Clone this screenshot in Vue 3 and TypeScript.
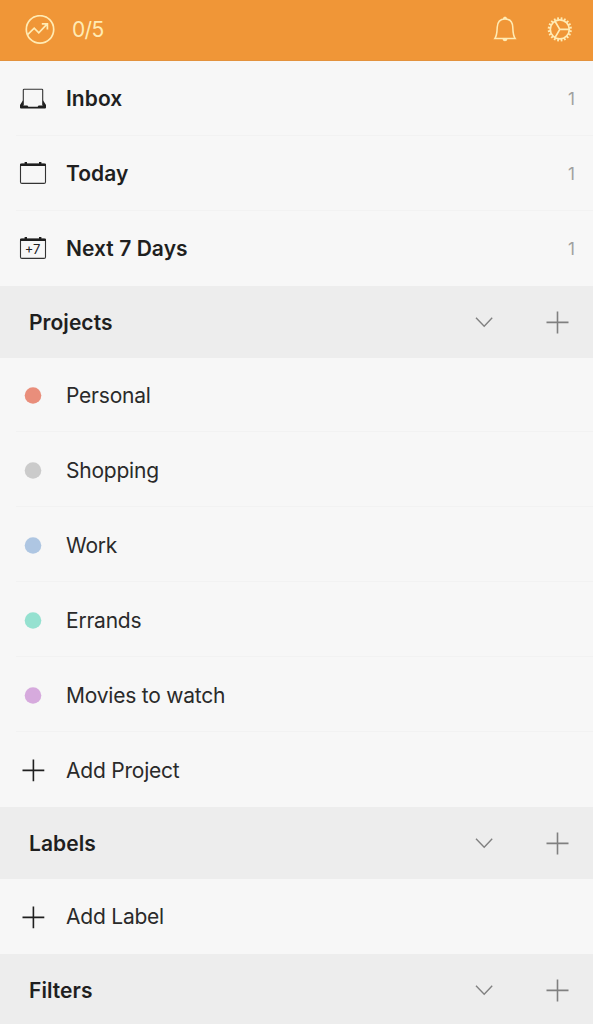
<script setup lang="ts">
interface Entry {
  label: string
  kind: 'inbox' | 'today' | 'week' | 'dot' | 'add'
  tone?: string
  count?: number
}
interface Section {
  title: string
  entries: Entry[]
}

const mainEntries: Entry[] = [
  { label: 'Inbox', kind: 'inbox', count: 1 },
  { label: 'Today', kind: 'today', count: 1 },
  { label: 'Next 7 Days', kind: 'week', count: 1 },
]

const sections: Section[] = [
  {
    title: 'Projects',
    entries: [
      { label: 'Personal', kind: 'dot', tone: 'coral' },
      { label: 'Shopping', kind: 'dot', tone: 'gray' },
      { label: 'Work', kind: 'dot', tone: 'blue' },
      { label: 'Errands', kind: 'dot', tone: 'mint' },
      { label: 'Movies to watch', kind: 'dot', tone: 'violet' },
      { label: 'Add Project', kind: 'add' },
    ],
  },
  { title: 'Labels', entries: [{ label: 'Add Label', kind: 'add' }] },
  { title: 'Filters', entries: [] },
]

const teeth = Array.from({ length: 20 }, (_, i) => i * 18)
</script>

<template>
  <div class="screen">
    <header class="topbar">
      <svg class="karma" width="30" height="30" viewBox="0 0 30 30">
        <circle cx="15" cy="14.4" r="13.7" />
        <path d="M2.6 19.6 L9.2 13.2 L13.8 17.8 L22 9.2 M16.8 8.8 H22.4 V14.4" />
      </svg>
      <span class="score">0/5</span>
      <svg class="bell" width="24" height="28" viewBox="0 0 24 28">
        <path d="M1.8 22.6 C4 19.6 4 16.8 4.2 11.4 C4.4 6 7.4 3 12 3 C16.6 3 19.6 6 19.8 11.4 C20 16.8 20 19.6 22.2 22.6 Z" />
        <path class="solid" d="M10 3 C10 1.4 10.8 0.8 12 0.8 C13.2 0.8 14 1.4 14 3 Z M9.6 23 C9.8 24.6 10.7 25.2 12 25.2 C13.3 25.2 14.2 24.6 14.4 23 Z" />
      </svg>
      <svg class="gear" width="26" height="26" viewBox="0 0 26 26">
        <g transform="translate(-0.2 -0.6)">
          <circle cx="13" cy="13" r="9.5" />
          <path d="M13 13 H22.5 M13 13 L8.2 4.8 M13 13 L8.2 21.2" />
          <path v-for="angle in teeth" :key="angle" class="tooth" d="M13 0.9 V3.4" :transform="`rotate(${angle + 9} 13 13)`" />
        </g>
      </svg>
    </header>

    <ul class="list">
      <li v-for="entry in mainEntries" :key="entry.label" class="row strong">
        <span class="lead">
          <svg v-if="entry.kind === 'inbox'" width="28" height="24" viewBox="0 0 28 24">
            <path class="ink" d="M4.2 13 L1 18 V20.6 Q1 21.6 2 21.6 H26 Q27 21.6 27 20.6 V18 L23.8 13 V18.6 H19.6 L18.6 19.8 H9.4 L8.4 18.6 H4.2 Z" />
            <path class="thin" d="M4.3 18.5 V3 Q4.3 2.2 5.1 2.2 H22.9 Q23.7 2.2 23.7 3 V18.5" />
          </svg>
          <svg v-else width="28" height="24" viewBox="0 0 28 24">
            <rect class="thin" x="1.5" y="2.2" width="25" height="19.2" rx="1.5" />
            <path class="ink" d="M1 4 V2.6 Q1 1.6 2 1.6 H5.6 V0 H8 V1.6 H20 V0 H22.4 V1.6 H26 Q27 1.6 27 2.6 V4 Z" />
            <text v-if="entry.kind === 'week'" x="13.6" y="17.2" text-anchor="middle">+7</text>
          </svg>
        </span>
        <span class="label">{{ entry.label }}</span>
        <span class="count">{{ entry.count }}</span>
      </li>
    </ul>

    <section v-for="section in sections" :key="section.title">
      <h2 class="section-bar">
        <span class="section-title">{{ section.title }}</span>
        <svg class="chevron" width="18" height="12" viewBox="0 0 18 12">
          <path d="M1 1.8 L9.2 10.2 L17.2 1.8" />
        </svg>
        <svg class="plus" width="23" height="23" viewBox="0 0 23 23">
          <path d="M0.5 11.4 H22.5 M11.5 0.4 V22.4" />
        </svg>
      </h2>
      <ul class="list">
        <li v-for="entry in section.entries" :key="entry.label" class="row">
          <span class="lead">
            <svg v-if="entry.kind === 'dot'" class="dot" :class="entry.tone" width="18" height="18" viewBox="0 0 18 18">
              <circle cx="9" cy="9.5" r="8.3" />
            </svg>
            <svg v-else class="plus dark" width="24" height="24" viewBox="0 0 24 24">
              <path d="M1.5 12.4 H23.3 M12.4 1.5 V23.3" />
            </svg>
          </span>
          <span class="label">{{ entry.label }}</span>
        </li>
      </ul>
    </section>
  </div>
</template>

<style>
body {
  margin: 0;
  background: #f7f7f7;
}
</style>

<style scoped>
.screen {
  width: 100%;
  height: 1024px;
  overflow: hidden;
  background: #f7f7f7;
  color: #1f1f1f;
  font-family: Inter, Roboto, "Liberation Sans", sans-serif;
}
svg {
  display: block;
  flex: none;
  fill: none;
}
.topbar {
  box-sizing: border-box;
  height: 61px;
  display: flex;
  align-items: center;
  padding: 0 20px 0 25px;
  background: #f09637;
  border-bottom: 1px solid #e3923d;
}
.topbar svg {
  stroke: #ffebb4;
  stroke-width: 1.7;
}
.score {
  margin-left: 17px;
  padding-bottom: 2px;
  flex: 1;
  color: #ffebb4;
  font-size: 21px;
  letter-spacing: -0.7px;
}
.bell {
  margin-right: 30px;
}
.topbar .bell {
  stroke-width: 1.5;
}
.topbar .bell .solid {
  fill: #ffebb4;
  stroke: none;
}
.gear .tooth {
  stroke-width: 1.8;
}
.list {
  margin: 0;
  padding: 0;
  list-style: none;
}
.row {
  position: relative;
  height: 75px;
  display: flex;
  align-items: center;
  padding-right: 18px;
}
section .row:first-child {
  height: 74px;
}
section:nth-of-type(2) .row:first-child {
  height: 75px;
}
.row:not(:last-child)::after {
  content: "";
  position: absolute;
  left: 16px;
  right: 0;
  bottom: 0;
  height: 1px;
  background: #f2f2f2;
}
.lead {
  width: 66px;
  display: flex;
  justify-content: center;
}
.label {
  flex: 1;
  padding-top: 1px;
  color: #2a2a2a;
  font-size: 21px;
  letter-spacing: -0.22px;
}
section .row:first-child .label {
  padding-top: 0;
}
.strong .label {
  padding: 0 0 1px;
  color: #1f1f1f;
}
.strong .label,
.section-title {
  font-weight: 600;
  letter-spacing: 0.05px;
}
.count {
  color: #a0a0a0;
  font-size: 17px;
}
.thin {
  stroke: #333;
  stroke-width: 1.1;
}
.ink {
  fill: #1f1f1f;
}
.lead text {
  fill: #222;
  font-size: 13px;
}
.section-bar {
  box-sizing: border-box;
  height: 72px;
  margin: 0;
  display: flex;
  align-items: center;
  padding: 0 24px 0 29px;
  background: #ededed;
  font-size: 21px;
}
.section-title {
  flex: 1;
}
.chevron {
  margin-right: 53px;
  stroke: #808080;
  stroke-width: 1.4;
}
.plus {
  stroke: #808080;
  stroke-width: 1.6;
}
.plus.dark {
  stroke: #1f1f1f;
}
.coral { fill: #e98e7b; }
.gray { fill: #cbcbcb; }
.blue { fill: #aec6e2; }
.mint { fill: #95e1d0; }
.violet { fill: #d6aadd; }
</style>
